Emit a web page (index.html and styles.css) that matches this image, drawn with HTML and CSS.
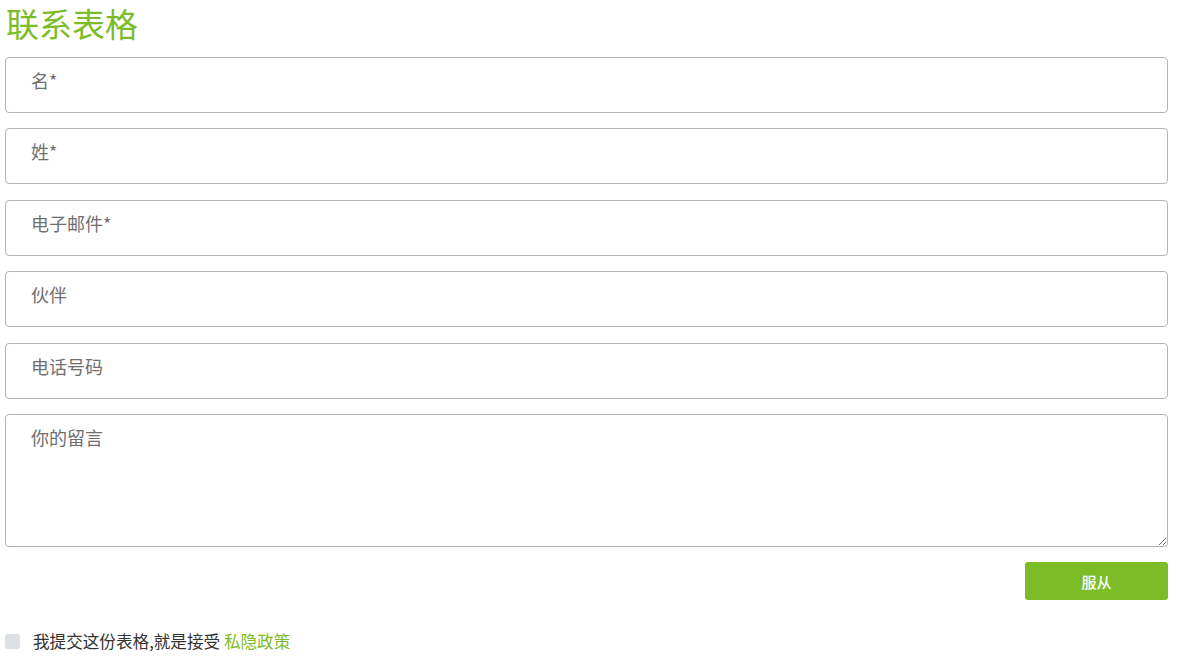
FILE: index.html
```html
<!DOCTYPE html>
<html lang="zh">
<head>
    <meta charset="utf-8">
    <title>联系表格</title>
    <link rel="stylesheet" href="styles.css">
</head>
<body>
<div class="contact">
    <h2 class="contact-title">联系表格</h2>
    <form class="contact-form">
        <input class="field" type="text" placeholder="名*">
        <input class="field" type="text" placeholder="姓*">
        <input class="field" type="email" placeholder="电子邮件*">
        <input class="field" type="text" placeholder="伙伴">
        <input class="field" type="tel" placeholder="电话号码">
        <textarea class="field field-message" placeholder="你的留言"></textarea>
        <div class="form-actions">
            <button class="submit" type="button">服从</button>
        </div>
        <label class="consent">
            <span class="check"></span>
            <span>我提交这份表格,就是接受 <a href="#">私隐政策</a></span>
        </label>
    </form>
</div>
</body>
</html>
```

FILE: styles.css
```css
* {
    box-sizing: border-box;
}

body {
    margin: 0;
    font-family: "Noto Sans CJK SC", "Open Sans", sans-serif;
    color: #555;
}

.contact {
    padding: 0 10px 0 5px;
}

.contact-title {
    margin: 0 0 11px;
    padding: 0 0 0 1px;
    font-size: 33px;
    font-weight: normal;
    line-height: 46px;
    color: #7cbd27;
}

.contact-form {
    display: flex;
    flex-direction: column;
}

.field {
    display: block;
    width: 100%;
    height: 56px;
    margin: 0 0 15.4px;
    padding: 0 25px 10px;
    border: 1px solid #b5b5b5;
    border-radius: 4px;
    font-family: inherit;
    font-size: 18px;
    color: #555;
    background: #fff;
}

.field::placeholder {
    color: #6f6f6f;
}

.field-message {
    height: 133px;
    padding-top: 9px;
    resize: vertical;
}

.form-actions {
    display: flex;
    justify-content: flex-end;
}

.submit {
    width: 143px;
    height: 38px;
    border: 0;
    border-radius: 3px;
    background: #7cbd27;
    color: #fff;
    font-family: inherit;
    font-size: 15px;
    font-weight: 500;
}

.consent {
    display: flex;
    align-items: center;
    gap: 13px;
    margin-top: 29px;
    font-size: 16.6px;
    color: #333;
}

.check {
    width: 15px;
    height: 15px;
    border-radius: 3px;
    background: #dde0e5;
}

.consent a {
    color: #7cbd27;
    text-decoration: none;
}
```
